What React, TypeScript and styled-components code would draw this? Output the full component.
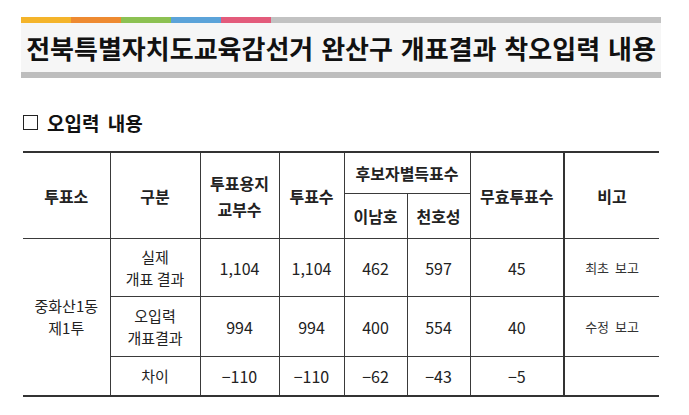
import React from 'react';
import styled, { createGlobalStyle } from 'styled-components';

const GlobalStyle = createGlobalStyle`
  html, body {
    margin: 0;
    padding: 0;
    background: #ffffff;
  }
  body {
    font-family: 'Noto Sans CJK KR', 'Noto Sans', sans-serif;
    color: #1e1e1e;
  }
`;

const STRIPES = ['#f4b42a', '#ee8a31', '#8cc152', '#5ba3d9', '#e35b7b'];

type Row = {
  label: string[];
  values: string[];
  note?: string;
  height: number;
};

const rows: Row[] = [
  {
    label: ['실제', '개표 결과'],
    values: ['1,104', '1,104', '462', '597', '45'],
    note: '최초 보고',
    height: 57,
  },
  {
    label: ['오입력', '개표결과'],
    values: ['994', '994', '400', '554', '40'],
    note: '수정 보고',
    height: 59,
  },
  {
    label: ['차이'],
    values: ['−110', '−110', '−62', '−43', '−5'],
    height: 38,
  },
];

const colWidths = [87, 90, 79, 65, 63, 63, 94, 95];

const App: React.FC = () => {
  return (
    <Page>
      <GlobalStyle />
      <Banner>
        <StripeBar>
          {STRIPES.map((c) => (
            <Stripe key={c} color={c} />
          ))}
          <StripeRest />
        </StripeBar>
        <TitleBox>
          <Title>전북특별자치도교육감선거 완산구 개표결과 착오입력 내용</Title>
        </TitleBox>
        <BottomBar />
      </Banner>

      <Section>
        <CheckBox />
        <span>오입력 내용</span>
      </Section>

      <Table>
        <colgroup>
          {colWidths.map((w, i) => (
            <col key={i} style={{ width: w }} />
          ))}
        </colgroup>
        <thead>
          <tr>
            <Th rowSpan={2}>투표소</Th>
            <Th rowSpan={2}>구분</Th>
            <Th rowSpan={2}>
              투표용지
              <br />
              교부수
            </Th>
            <Th rowSpan={2}>투표수</Th>
            <Th colSpan={2} $h={40}>
              후보자별득표수
            </Th>
            <Th rowSpan={2} $thickRight>
              무효투표수
            </Th>
            <Th rowSpan={2}>비고</Th>
          </tr>
          <tr>
            <Th $h={44}>이남호</Th>
            <Th $h={44}>천호성</Th>
          </tr>
        </thead>
        <tbody>
          {rows.map((r, i) => (
            <tr key={i}>
              {i === 0 && (
                <LabelCell rowSpan={3}>
                  중화산1동
                  <br />
                  제1투
                </LabelCell>
              )}
              <LabelCell $h={r.height}>
                {r.label.map((l, j) => (
                  <React.Fragment key={j}>
                    {j > 0 && <br />}
                    {l}
                  </React.Fragment>
                ))}
              </LabelCell>
              {r.values.map((v, j) => (
                <Td key={j} $thickRight={j === 4}>
                  {v}
                </Td>
              ))}
              <NoteCell>{r.note}</NoteCell>
            </tr>
          ))}
        </tbody>
      </Table>
    </Page>
  );
};

const Page = styled.div`
  width: 689px;
  height: 415px;
  padding: 17px 0 0 21px;
  box-sizing: border-box;
  overflow: hidden;
`;

const Banner = styled.div`
  width: 640px;
  display: flex;
  flex-direction: column;
`;

const StripeBar = styled.div`
  display: flex;
  height: 6px;
`;

const Stripe = styled.div<{ color: string }>`
  width: 50px;
  flex: none;
  background: ${(p) => p.color};
`;

const StripeRest = styled.div`
  flex: 1;
  background: #c2c2c2;
`;

const TitleBox = styled.div`
  height: 49px;
  background: #f6f6f6;
  display: flex;
  align-items: center;
  justify-content: center;
`;

const Title = styled.h1`
  margin: 0;
  font-size: 26px;
  font-weight: 700;
  letter-spacing: 0;
  color: #111;
  white-space: nowrap;
  word-spacing: 2px;
`;

const BottomBar = styled.div`
  height: 6px;
  background: #bdbdbd;
`;

const Section = styled.div`
  display: flex;
  align-items: center;
  gap: 9px;
  margin: 32px 0 0 2px;
  font-size: 19px;
  font-weight: 700;
  color: #111;
  word-spacing: 4px;
  height: 24px;
`;

const CheckBox = styled.span`
  display: inline-block;
  width: 13px;
  height: 13px;
  border: 1.5px solid #222;
`;

const Table = styled.table`
  margin: 17px 0 0 2px;
  width: 636px;
  table-layout: fixed;
  border-collapse: collapse;
  border-top: 2px solid #333;
  border-bottom: 2px solid #333;
  font-size: 16px;
`;

const cellBase = `
  border: 1px solid #3a3a3a;
  text-align: center;
  vertical-align: middle;
  padding: 0;
  color: #222;
  &:first-child {
    border-left: none;
  }
  &:last-child {
    border-right: none;
  }
`;

const Th = styled.th<{ $h?: number; $thickRight?: boolean }>`
  ${cellBase}
  font-weight: 700;
  line-height: 26px;
  height: ${(p) => (p.$h ? `${p.$h}px` : 'auto')};
  ${(p) => p.$thickRight && 'border-right: 2px solid #333;'}
`;

const Td = styled.td<{ $h?: number; $thickRight?: boolean }>`
  ${cellBase}
  font-weight: 400;
  height: ${(p) => (p.$h ? `${p.$h}px` : 'auto')};
  line-height: 22px;
  ${(p) => p.$thickRight && 'border-right: 2px solid #333;'}
`;

const LabelCell = styled.td<{ $h?: number }>`
  ${cellBase}
  font-size: 15px;
  line-height: 22px;
  height: ${(p) => (p.$h ? `${p.$h}px` : 'auto')};
`;

const NoteCell = styled.td`
  ${cellBase}
  font-size: 13px;
  word-spacing: 3px;
  color: #333;
`;

export default App;
